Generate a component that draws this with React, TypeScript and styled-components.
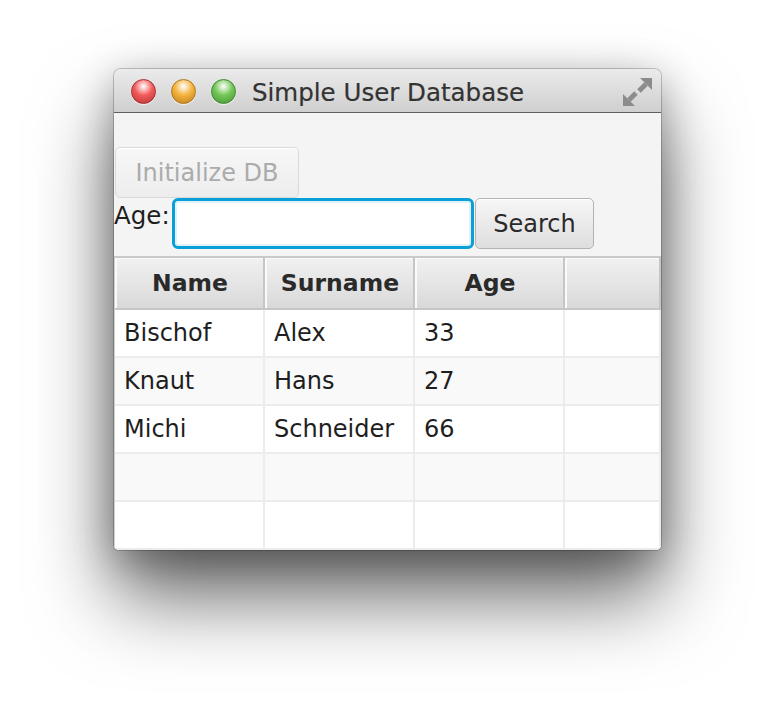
import React from "react";
import styled, { createGlobalStyle } from "styled-components";

const Global = createGlobalStyle`
  html, body { margin: 0; padding: 0; background: #ffffff; }
  body { font-family: "DejaVu Sans", "Liberation Sans", sans-serif; }
`;

const Page = styled.div`
  width: 774px;
  height: 708px;
  padding: 69px 0 0 114px;
  box-sizing: border-box;
  background: #ffffff;
`;

const Window = styled.div`
  width: 547px;
  height: 481px;
  display: flex;
  flex-direction: column;
  border-radius: 7px 7px 5px 5px;
  overflow: hidden;
  background: #f4f4f4;
  box-shadow: 0 48px 80px rgba(0, 0, 0, 0.58), 0 10px 40px rgba(0, 0, 0, 0.3),
    0 0 0 1px rgba(0, 0, 0, 0.2);
`;

const TitleBar = styled.div`
  height: 41px;
  flex: none;
  display: flex;
  align-items: center;
  padding: 2px 9px 0 17px;
  background: linear-gradient(#ebebeb, #cfcfcf);
  border-bottom: 1px solid #5f5f5f;
  box-sizing: content-box;
`;

const Light = styled.div<{ $c: string; $b: string }>`
  width: 23px;
  height: 23px;
  border-radius: 50%;
  margin-right: 15px;
  border: 1px solid ${(p) => p.$b};
  background: radial-gradient(circle at 50% 28%, #ffffff 0%, ${(p) => p.$c} 45%, ${(p) => p.$b} 110%);
  box-shadow: 0 1px 1px rgba(255, 255, 255, 0.7);
`;

const Title = styled.div`
  margin-left: 1px;
  font-size: 24.5px;
  color: #333333;
  flex: 1;
  line-height: 1;
  padding-top: 3px;
  -webkit-text-stroke: 0.2px #333333;
`;

const Resize = styled.svg`
  width: 29px;
  height: 28px;
  margin-top: 1px;
`;

const Content = styled.div`
  flex: 1;
  display: flex;
  flex-direction: column;
  padding-top: 34px;
`;

const Button = styled.button<{ $disabled?: boolean }>`
  font-family: "DejaVu Sans", "Liberation Sans", sans-serif;
  font-size: 24px;
  height: 51px;
  padding: 0 16px;
  border-radius: 5px;
  box-sizing: border-box;
  color: ${(p) => (p.$disabled ? "#ababab" : "#2a2a2a")};
  border: 1px solid ${(p) => (p.$disabled ? "#d9d9d9" : "#b3b3b3")};
  background: ${(p) =>
    p.$disabled
      ? "linear-gradient(#f7f7f7, #ededed)"
      : "linear-gradient(#f6f6f6, #dedede)"};
  box-shadow: inset 0 1px 0 #ffffff;
`;

const InitButton = styled(Button)`
  align-self: flex-start;
  margin-left: 1px;
  width: 184px;
`;

const SearchRow = styled.div`
  display: flex;
  align-items: flex-start;
  height: 51px;
`;

const Label = styled.div`
  font-size: 24.5px;
  color: #1e1e1e;
  line-height: 35px;
  width: 58px;
`;

const Input = styled.input`
  width: 302px;
  height: 51px;
  box-sizing: border-box;
  border: 3px solid #0b9fd8;
  border-radius: 6px;
  background: #ffffff;
  box-shadow: inset 0 0 0 2px #dff1fa;
  outline: none;
  font-size: 24px;
  padding: 0 10px;
`;

const SearchButton = styled(Button)`
  width: 119px;
  margin-left: 1px;
  padding: 0;
`;

const Table = styled.div`
  margin-top: 7px;
  flex: 1;
  display: grid;
  grid-template-columns: 150px 150px 150px 1fr;
  grid-template-rows: 52px repeat(5, 48px);
  border-top: 2px solid #c9c9c9;
  border-left: 1px solid #d0d0d0;
  background: #ffffff;
`;

const HeaderCell = styled.div`
  display: flex;
  align-items: center;
  justify-content: center;
  padding-left: 2px;
  font-weight: bold;
  font-size: 23.5px;
  color: #2a2a2a;
  background: linear-gradient(#f1f1f1, #d9d9d9);
  border-right: 2px solid #c6c6c6;
  border-bottom: 2px solid #c6c6c6;
  box-shadow: inset 2px 1px 0 #fafafa;
  box-sizing: border-box;
`;

const Cell = styled.div<{ $odd: boolean }>`
  display: flex;
  align-items: center;
  padding-left: 9px;
  font-size: 24px;
  color: #1e1e1e;
  background: ${(p) => (p.$odd ? "#f9f9f9" : "#ffffff")};
  border-right: 2px solid #ececec;
  border-bottom: 2px solid #ececec;
  box-sizing: border-box;
  white-space: nowrap;
`;

const rows: string[][] = [
  ["Bischof", "Alex", "33", ""],
  ["Knaut", "Hans", "27", ""],
  ["Michi", "Schneider", "66", ""],
  ["", "", "", ""],
  ["", "", "", ""],
];

export default function App() {
  return (
    <Page>
      <Global />
      <Window>
        <TitleBar>
          <Light $c="#f35b5b" $b="#a92d2d" />
          <Light $c="#f4b13c" $b="#b07818" />
          <Light $c="#73c655" $b="#3e8a2f" />
          <Title>Simple User Database</Title>
          <Resize viewBox="0 0 29 28">
            <polygon points="29,0 29,12 17,0" fill="#8c8c8c" />
            <line x1="23" y1="6" x2="16" y2="13" stroke="#8c8c8c" strokeWidth="5" />
            <polygon points="0,28 0,16 12,28" fill="#8c8c8c" />
            <line x1="6" y1="22" x2="13" y2="15" stroke="#8c8c8c" strokeWidth="5" />
          </Resize>
        </TitleBar>
        <Content>
          <InitButton $disabled>Initialize DB</InitButton>
          <SearchRow>
            <Label>Age:</Label>
            <Input />
            <SearchButton>Search</SearchButton>
          </SearchRow>
          <Table>
            <HeaderCell>Name</HeaderCell>
            <HeaderCell>Surname</HeaderCell>
            <HeaderCell>Age</HeaderCell>
            <HeaderCell />
            {rows.map((r, i) =>
              r.map((v, j) => (
                <Cell key={`${i}-${j}`} $odd={i % 2 === 1}>
                  {v}
                </Cell>
              ))
            )}
          </Table>
        </Content>
      </Window>
    </Page>
  );
}
